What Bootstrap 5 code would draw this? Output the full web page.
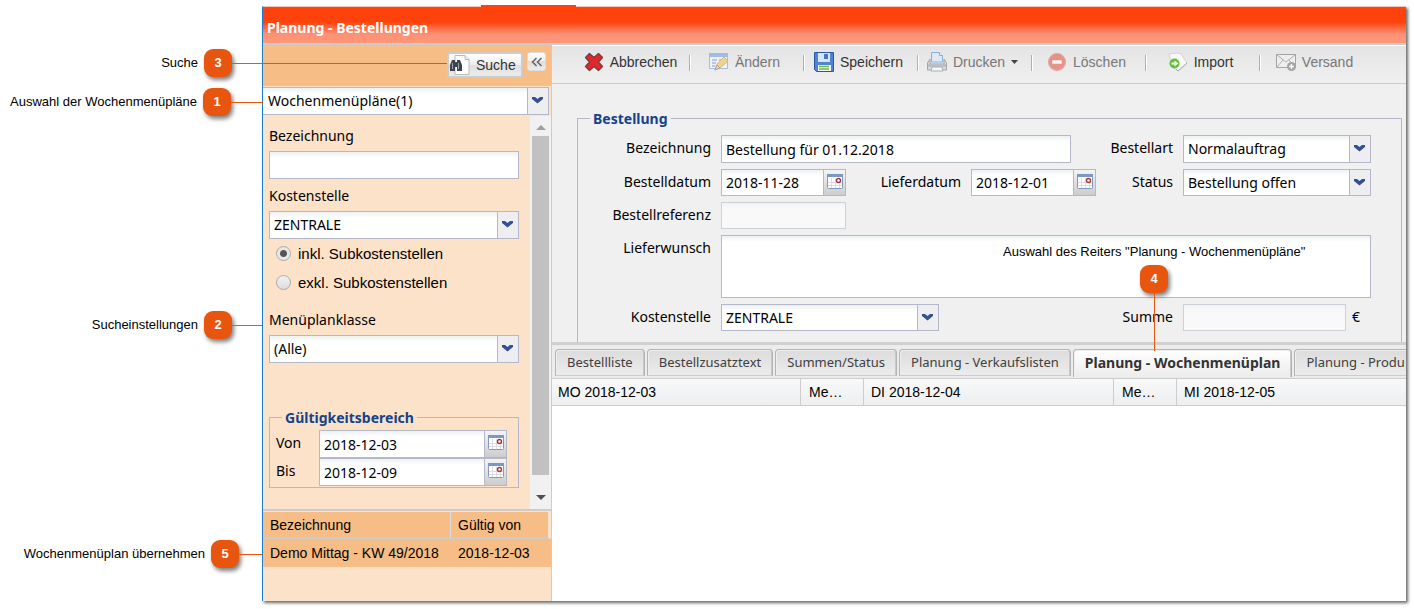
<!DOCTYPE html>
<html lang="de">
<head>
<meta charset="utf-8">
<meta name="viewport" content="width=device-width, initial-scale=1">
<title>Planung - Bestellungen</title>
<link rel="stylesheet" href="https://cdn.jsdelivr.net/npm/bootstrap@5.3.0/dist/css/bootstrap.min.css">
<style>
:root{--line:#ccc;--edge:#b5b8c8;--peach:#fce2c9;--apricot:#f7bd87;--pin:#e8550f;
--ui:"Noto Sans","DejaVu Sans Condensed",sans-serif;--arial:"Liberation Sans",Arial,sans-serif}
body{font:14px/20px var(--ui);color:#000;background:#fff}
.page{min-height:100vh;padding:6px 8px 8px 0}
/* callouts */
.notes{width:262px;font:13px/28px var(--arial);flex:none;z-index:3;padding-top:43px}
.note{white-space:nowrap}
.note-1{margin-top:11px}.note-2{margin-top:195px}.note-5{margin-top:201px}
.pin{width:28px;height:28px;border-radius:9px;background:var(--pin);color:#fff;font:bold 13px/28px var(--arial);text-align:center;box-shadow:2px 3px 4px rgba(0,0,0,.5);margin-left:6px;flex:none}
.wire{height:1px;background:var(--pin);flex:none;width:30px}
.wire-3{width:215px;margin-right:-185px}.wire-1{width:32px;margin-right:-1px}.wire-5{width:23px}
.note-4{position:absolute;left:451px;top:199px;z-index:4;font:13px/16px var(--arial);color:#000;pointer-events:none}
.note-4 .pin{margin:5px 0 0}
.wire-4{width:1px;height:58px;background:var(--pin)}
/* window */
.win{border-left:1px solid #1b7fd0;border-top:1px solid #f4c9bb;box-shadow:2px 2px 3px rgba(0,0,0,.6);min-width:0}
.title-bar{height:38px;background:linear-gradient(#ff420b 0,#ff420b 15px,#ff9075 27px,#ff9879 36px);border-bottom:2px solid var(--line);color:#fff;font-weight:bold;padding:11px 4px 0;position:relative;white-space:nowrap}
.title-bar::before{content:"";position:absolute;left:218px;top:-2px;width:95px;height:2px;background:#ff420b}
/* search side */
.side{width:289px;background:var(--peach);border-right:1px solid var(--line);flex:none}
.side-bar{height:41px;background:var(--apricot);padding:7px 5px 0;gap:4px}
.tool{border:1px solid #ccc;border-radius:3px;background:linear-gradient(#fff,#ededed 49%,#dedede 50%,#ececec);padding:0}
.tool-find{width:76px;height:26px;font:14px/22px var(--arial);color:#333;border-width:2px;gap:5px}
.tool-fold{width:19px;height:19px;border-color:#ddd;line-height:1}
.field{height:28px;border:1px solid var(--edge);border-radius:0;background:#fff linear-gradient(#edf1f2,#fff 6px);font:14px/20px var(--ui);color:#000;padding:1px 4px;min-width:0;display:block;width:100%}
.field:disabled{background:#f9f9f9 linear-gradient(#f1f3f3,#f9f9f9 6px);opacity:1;border-color:#cdcfd9}
select.field{appearance:none;padding-right:24px;background:
 url("data:image/svg+xml,%3Csvg xmlns='http://www.w3.org/2000/svg' width='21' height='26'%3E%3Cpath fill='%23eeeef1' d='M0 0h21v26H0z'/%3E%3Cpath fill='%23b5b8c8' d='M0 0h1v26H0z'/%3E%3Cpath fill='%23344f93' d='M5 9h3l2.500 2 2.500-2h3v2l-5.500 4.500L5 11z'/%3E%3C/svg%3E") right top no-repeat,#fff linear-gradient(#edf1f2,#fff 6px)}
.f27{height:27px}
.top-pick .field{border-left:0;padding-left:5px}
.top-pick{width:286px;padding-top:1px;margin-bottom:1px}
.scroller{height:395px;border-bottom:2px solid var(--line)}
.criteria{padding:10px 11px 0 6px;min-width:0}
.criteria label{display:block}
.criteria>label{margin-bottom:5px}
.criteria>input{margin-bottom:7px}
.criteria .lab-class{padding-top:13px}
.opt{height:29px;padding-left:7px;gap:7px;font:15px/28px var(--arial)}
.opt input{appearance:none;width:15px;height:15px;border:1px solid #aaa;border-radius:50%;background:linear-gradient(#f2f2f2,#ddd);margin:0}
.opt input:checked{background:radial-gradient(circle,#555 0 3px,#e8e8e8 4px)}
.box{border:1px solid var(--edge);position:relative;margin:0}
.box>legend{float:none;position:absolute;top:-10px;left:12px;width:auto;margin:0;padding:0 3px;font-size:14px;line-height:20px;font-weight:bold;color:#15428b;background:var(--peach)}
.range{padding:12px 11px 1px 6px;margin-top:54px}
.range label{width:43px;flex:none;line-height:25px}
.cal{width:22px;border:1px solid var(--edge);border-left:0;background:linear-gradient(#f4f4f4,#ddd 60%,#ccc);padding:0 0 3px;flex:none;display:flex;align-items:center;justify-content:center}
.bar{width:21px;background:#f1f1f1;flex:none;padding:8px 0}
.thumb{width:17px;flex:1;background:#c1c1c1;margin:6px 0 20px}
.hits{font:14px/20px var(--arial);width:100%;table-layout:fixed;border-collapse:separate;border-spacing:0}
.hits th,.hits td{font-weight:normal;background:var(--apricot);white-space:nowrap;overflow:hidden;padding:3px 7px;height:27px}
.hits thead th{border-bottom:1px solid #ccc;border-top:1px solid var(--peach)}
.hits thead th+th{border-left:1px solid #ddd;border-right:3px solid var(--peach)}
.hits tbody td{height:28px;padding-top:2px}
/* order side */
.actions{height:39px;background:linear-gradient(#e4e4e4,#f0f0f0);border-top:1px solid #fff;border-bottom:1px solid #ccc;padding-left:24px;overflow:hidden}
.act{width:114px;height:34px;border:0;background:none;font:14px/20px var(--arial);color:#333;padding:0 5px 2px 0;gap:6px;flex:none;position:relative;display:flex;align-items:center;justify-content:center}
.act:not(:last-child)::after{content:"";position:absolute;right:-1px;top:9px;width:2px;height:16px;background:linear-gradient(90deg,#b5b0a3 50%,#fff 50%)}
.act.off{color:#777}
.act.off svg:first-child{opacity:.6}
.orders{min-width:0}
.order{background:#f0f0f0;padding:34px 4px 0 25px;border-bottom:3px solid #d0d0d0;height:261px}
.order .box{border-bottom:0;height:224px;padding:16px 30px 0 0}
.order .box>legend{background:#f0f0f0}
.line-up{display:flex;margin-bottom:6px}
.line-up label{text-align:right;width:133px;flex:none;line-height:26px;margin-right:10px;white-space:nowrap}
.line-up .lab-mid{width:115px}
.line-up .lab-end{width:102px}
.line-up .grow-field{flex:1 1 0}
.date{width:125px}
.w-pick{width:188px;flex:none}
.w-sum{width:163px;flex:none}
.w-cost{width:218px}
.unit{width:25px;padding-left:6px;line-height:26px;flex:none}
textarea.field{height:63px;resize:none}
/* tabs */
.reiter{height:34px;background:#ececec;border-bottom:1px solid #ccc;padding:4px 0 0 3px;gap:2px;overflow:hidden;flex-wrap:nowrap}
.reiter .lasche{border:1px solid #b4b4b4;border-bottom-color:#ccc;box-shadow:inset 1px 1px #eee,inset -1px 0 #c8c8c8;border-radius:4px 4px 0 0;background:linear-gradient(#dcdcdc,#ececec);height:27px;color:#404040;padding:1px 11px 3px;font:13px/22px var(--ui);white-space:nowrap;flex:none}
.reiter .lasche.active{background:linear-gradient(#fff,#ececec);font-weight:bold;font-size:14px;color:#333;height:28px;border-bottom:0}
.plan{width:100%;table-layout:fixed;border-collapse:separate;border-spacing:0;font:14px/20px var(--arial)}
.plan th{font-weight:normal;background:linear-gradient(#f9f9f9,#eceef0);height:27px;padding:2px 6px;border-right:1px solid #ccc;border-bottom:1px solid #ccc;white-space:nowrap;overflow:hidden}
.plan th:last-child{border-right:0}
.plan th:nth-child(even){padding-left:8px}
.plan th:nth-child(odd):not(:first-child){padding-left:7px}
.c-day{width:249px}.c-menu{width:63px}.c-day2{width:250px}.c-name{width:187px}
svg{display:block;flex:none}
</style>
</head>
<body>
<svg width="0" height="0" class="position-absolute" aria-hidden="true">
 <symbol id="cal" viewBox="0 0 16 15"><rect x=".5" y=".5" width="15" height="14" rx="1" fill="#fff" stroke="#8298bd"/><path d="M0 0h16v3H0z" fill="#7b97c4"/><path d="M4.500 4v10M8.500 4v10M12.500 4v10M1 8.500h14M1 11.500h14" stroke="#dcdce2"/><circle cx="11.500" cy="6.500" r="2" fill="#fff" stroke="#a8323a" stroke-width="1.400"/></symbol>
</svg>
<div class="page d-flex position-relative">
 <aside class="notes">
  <div class="note d-flex align-items-center justify-content-end"><span>Suche</span><span class="pin">3</span><span class="wire wire-3"></span></div>
  <div class="note note-1 d-flex align-items-center justify-content-end"><span>Auswahl der Wochenmenüpläne</span><span class="pin">1</span><span class="wire wire-1"></span></div>
  <div class="note note-2 d-flex align-items-center justify-content-end"><span>Sucheinstellungen</span><span class="pin">2</span><span class="wire"></span></div>
  <div class="note note-5 d-flex align-items-center justify-content-end"><span>Wochenmenüplan übernehmen</span><span class="pin">5</span><span class="wire wire-5"></span></div>
 </aside>
 <main class="win flex-grow-1 d-flex flex-column">
  <header class="title-bar">Planung - Bestellungen</header>
  <div class="d-flex flex-grow-1">
   <section class="side">
    <div class="side-bar d-flex justify-content-end">
     <button type="button" class="tool tool-find d-flex align-items-center"><svg width="22" height="22" viewBox="0 0 22 22"><path d="M6 1.500h10l4 4v15H6z" fill="#fff" stroke="#bbb"/><path d="M16 1.500v4h4" fill="#eee" stroke="#bbb"/><path d="M3 6h3v2h2V6h3l2 5v6H8v-4H6v4H1v-6z" fill="#3d4650"/><path d="M3.500 9v6M9.500 9v6" stroke="#9aa3ad"/></svg><span>Suche</span></button>
     <button type="button" class="tool tool-fold d-flex align-items-center justify-content-center" aria-label="Einklappen"><svg width="12" height="10" viewBox="0 0 12 10"><path d="M5.500 1 1.500 5l4 4M10.500 1l-4 4 4 4" fill="none" stroke="#666" stroke-width="1.500"/></svg></button>
    </div>
    <div class="top-pick"><select class="field" aria-label="Auswahl"><option>Wochenmenüpläne(1)</option></select></div>
    <div class="scroller d-flex">
     <div class="criteria flex-grow-1">
      <label for="s-name">Bezeichnung</label>
      <input class="field" id="s-name" type="text">
      <label for="s-cost">Kostenstelle</label>
      <select class="field" id="s-cost"><option>ZENTRALE</option></select>
      <div class="opt d-flex align-items-center"><input type="radio" name="sub" id="r1" checked><label for="r1">inkl. Subkostenstellen</label></div>
      <div class="opt d-flex align-items-center"><input type="radio" name="sub" id="r2"><label for="r2">exkl. Subkostenstellen</label></div>
      <label for="s-class" class="lab-class">Menüplanklasse</label>
      <select class="field" id="s-class"><option>(Alle)</option></select>
      <fieldset class="box range"><legend>Gültigkeitsbereich</legend>
       <div class="d-flex"><label for="von">Von</label><input class="field" id="von" value="2018-12-03"><button type="button" class="cal" aria-label="Kalender"><svg width="16" height="15"><use href="#cal"/></svg></button></div>
       <div class="d-flex"><label for="bis">Bis</label><input class="field" id="bis" value="2018-12-09"><button type="button" class="cal" aria-label="Kalender"><svg width="16" height="15"><use href="#cal"/></svg></button></div>
      </fieldset>
     </div>
     <div class="bar d-flex flex-column align-items-center" aria-hidden="true"><svg width="10" height="6"><path d="M0 6 5 1l5 5z" fill="#a0a0a0"/></svg><div class="thumb"></div><svg width="10" height="6"><path d="M0 0h10L5 5z" fill="#505050"/></svg></div>
    </div>
    <table class="hits"><colgroup><col class="c-name"><col></colgroup>
     <thead><tr><th>Bezeichnung</th><th>Gültig von</th></tr></thead>
     <tbody><tr><td>Demo Mittag - KW 49/2018</td><td class="ps-2">2018-12-03</td></tr></tbody>
    </table>
   </section>
   <section class="orders flex-grow-1 d-flex flex-column bg-white position-relative overflow-hidden">
    <div class="actions d-flex">
     <button type="button" class="act"><svg width="20" height="20" viewBox="0 0 20 20"><path d="M5.500 1.500 10 5.500l4.500-4 4 4L14.500 10l4 4.500-4 4-4.500-4-4.500 4-4-4 4-4.500-4-4.500z" fill="#e0282c" stroke="#7c3a38" stroke-width="1.300" stroke-linejoin="round"/></svg>Abbrechen</button>
     <button type="button" class="act off"><svg width="20" height="20" viewBox="0 0 20 20"><rect x=".5" y="1.500" width="18" height="15" fill="#f4f9ff" stroke="#7da2d8"/><path d="M0 1h19v4H0z" fill="#74a0dc"/><path d="M3 8h5M10 8h6M3 11h4M3 14h3" stroke="#6f9bd6" stroke-width="1.500"/><path d="m6 18 2-6 7-7 4 4-8 7z" fill="#f7c64e" stroke="#c39a50"/><path d="m6 18 2-5 3 3z" fill="#f3cfa8" stroke="#8f6c55"/></svg>Ändern</button>
     <button type="button" class="act"><svg width="20" height="20" viewBox="0 0 20 20"><path d="M.5.500h19v19h-17l-2-2z" fill="#5183cf" stroke="#2c56a5"/><path d="M4 1h12v9H4z" fill="#d5e6fa"/><path d="M10 2h4v5h-4z" fill="#4b76bd"/><path d="M4 13h13v6H4z" fill="#f6f9f1"/><path d="M5 14.500h10M5 17h10" stroke="#69b956" stroke-width="1.500"/></svg>Speichern</button>
     <button type="button" class="act off"><svg width="20" height="20" viewBox="0 0 20 20"><path d="M4.500.500h8l3 3V10h-11z" fill="#d7eafd" stroke="#4a8ad0"/><path d="M12.500.500v3h3" fill="#fff" stroke="#4a8ad0"/><path d="M3 7 .5 11v7h19v-7L17 7v5H3z" fill="#d0d2d6" stroke="#777"/><path d="M1 12h18v3H1z" fill="#9da2ad"/><path d="M5 15h10l1 4H4z" fill="#fff" stroke="#888"/></svg>Drucken<svg width="7" height="4"><path d="M0 0h7L3.500 4z" fill="#444"/></svg></button>
     <button type="button" class="act off"><svg width="20" height="20" viewBox="0 0 20 20"><circle cx="10" cy="10" r="8.500" fill="#e85a4c" stroke="#d87c74"/><path d="M5 8h10v4H5z" fill="#fff" stroke="#cc574f" stroke-width=".5"/></svg>Löschen</button>
     <button type="button" class="act"><svg width="20" height="20" viewBox="0 0 20 20"><path d="m1 2 9-1 3 1 6 9-9 8-5-4z" fill="#f8f8f8" stroke="#d4d4d4"/><path d="m19 11-9 8-2-2" fill="none" stroke="#aaa"/><circle cx="6.500" cy="11.500" r="5" fill="#5dc331"/><path d="M3.500 10.500h3v-2l4 3-4 3v-2h-3z" fill="#fff"/></svg>Import</button>
     <button type="button" class="act off"><svg width="20" height="20" viewBox="0 0 20 20"><path d="M.5 2.500h19v13H.5z" fill="#f3f3f3" stroke="#777"/><path d="m1 3 9 7 9-7M1 15l6-7M19 15l-6-7" fill="none" stroke="#888"/><circle cx="15.500" cy="14.500" r="4.500" fill="#777"/><path d="M15.500 12v5M13 14.500h5" stroke="#fff" stroke-width="1.500"/></svg>Versand</button>
    </div>
    <div class="order">
     <fieldset class="box"><legend>Bestellung</legend>
      <div class="line-up"><label for="o-name">Bezeichnung</label><input class="field grow-field" id="o-name" value="Bestellung für 01.12.2018"><label class="lab-end" for="o-kind">Bestellart</label><select class="field w-pick" id="o-kind"><option>Normalauftrag</option></select></div>
      <div class="line-up"><label for="o-date">Bestelldatum</label><div class="date d-flex"><input class="field f27" id="o-date" value="2018-11-28"><button type="button" class="cal" aria-label="Kalender"><svg width="16" height="15"><use href="#cal"/></svg></button></div><label class="lab-mid" for="o-deliv">Lieferdatum</label><div class="date d-flex"><input class="field f27" id="o-deliv" value="2018-12-01"><button type="button" class="cal" aria-label="Kalender"><svg width="16" height="15"><use href="#cal"/></svg></button></div><label class="flex-grow-1 w-auto" for="o-state">Status</label><select class="field f27 w-pick" id="o-state"><option>Bestellung offen</option></select></div>
      <div class="line-up"><label for="o-ref">Bestellreferenz</label><input class="field f27 date" id="o-ref" disabled></div>
      <div class="line-up"><label for="o-wish">Lieferwunsch</label><textarea class="field" id="o-wish"></textarea></div>
      <div class="line-up"><label for="o-cost">Kostenstelle</label><select class="field f27 w-cost" id="o-cost"><option>ZENTRALE</option></select><label class="flex-grow-1 w-auto" for="o-sum">Summe</label><input class="field f27 w-sum" id="o-sum" disabled><span class="unit">€</span></div>
     </fieldset>
    </div>
    <nav class="reiter d-flex">
     <button type="button" class="lasche">Bestellliste</button><button type="button" class="lasche">Bestellzusatztext</button><button type="button" class="lasche">Summen/Status</button><button type="button" class="lasche">Planung - Verkaufslisten</button><button type="button" class="lasche active">Planung - Wochenmenüplan</button><button type="button" class="lasche">Planung - Produ</button>
    </nav>
    <table class="plan"><colgroup><col class="c-day"><col class="c-menu"><col class="c-day2"><col class="c-menu"><col></colgroup>
     <thead><tr><th>MO 2018-12-03</th><th>Me…</th><th>DI 2018-12-04</th><th>Me…</th><th>MI 2018-12-05</th></tr></thead>
    </table>
    <div class="note-4 d-flex flex-column align-items-center"><span>Auswahl des Reiters "Planung - Wochenmenüpläne"</span><span class="pin">4</span><span class="wire-4"></span></div>
   </section>
  </div>
 </main>
</div>
<script src="https://cdn.jsdelivr.net/npm/bootstrap@5.3.0/dist/js/bootstrap.bundle.min.js"></script>
</body>
</html>
